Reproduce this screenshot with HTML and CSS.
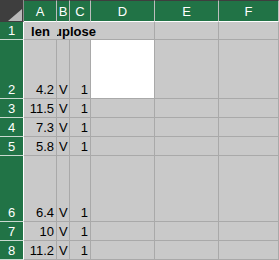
FILE: index.html
```html
<!DOCTYPE html>
<html>
<head>
<meta charset="utf-8">
<link rel="stylesheet" href="styles.css">
</head>
<body>
<div class="sheet">
  <div class="corner"><svg class="tri" width="14" height="12" viewBox="0 0 14 12"><polygon points="14,0 14,12 0,12" fill="#b9b9b9"/></svg></div>
  <div class="ch">A</div>
  <div class="ch">B</div>
  <div class="ch">C</div>
  <div class="ch">D</div>
  <div class="ch">E</div>
  <div class="ch">F</div>

  <div class="rh">1</div>
  <div class="c head center nob">len</div>
  <div class="c head span3"><span class="ovf">uplose</span></div>
  <div class="c"></div>
  <div class="c"></div>

  <div class="rh">2</div>
  <div class="c num">4.2</div>
  <div class="c txt">Ve</div>
  <div class="c num">1</div>
  <div class="c white"></div>
  <div class="c"></div>
  <div class="c"></div>

  <div class="rh">3</div>
  <div class="c num">11.5</div>
  <div class="c txt">Ve</div>
  <div class="c num">1</div>
  <div class="c"></div>
  <div class="c"></div>
  <div class="c"></div>

  <div class="rh">4</div>
  <div class="c num">7.3</div>
  <div class="c txt">Ve</div>
  <div class="c num">1</div>
  <div class="c"></div>
  <div class="c"></div>
  <div class="c"></div>

  <div class="rh">5</div>
  <div class="c num">5.8</div>
  <div class="c txt">Ve</div>
  <div class="c num">1</div>
  <div class="c"></div>
  <div class="c"></div>
  <div class="c"></div>

  <div class="rh">6</div>
  <div class="c num">6.4</div>
  <div class="c txt">Ve</div>
  <div class="c num">1</div>
  <div class="c"></div>
  <div class="c"></div>
  <div class="c"></div>

  <div class="rh">7</div>
  <div class="c num">10</div>
  <div class="c txt">Ve</div>
  <div class="c num">1</div>
  <div class="c"></div>
  <div class="c"></div>
  <div class="c"></div>

  <div class="rh">8</div>
  <div class="c num">11.2</div>
  <div class="c txt">Ve</div>
  <div class="c num">1</div>
  <div class="c"></div>
  <div class="c"></div>
  <div class="c"></div>
</div>
</body>
</html>
```

FILE: styles.css
```css
html, body {
  margin: 0;
  padding: 0;
  background: #c9c9c9;
  overflow: hidden;
}
.sheet {
  display: grid;
  grid-template-columns: 24px 33px 13px 21px 64px 64px 60px;
  grid-template-rows: 22px 18px 59px 19px 19px 19px 66px 19px 19px;
  width: 279px;
  height: 260px;
  font-family: "Liberation Sans", Arial, sans-serif;
  font-size: 13px;
  color: #000;
}
.sheet > div {
  box-sizing: border-box;
  overflow: hidden;
  white-space: nowrap;
}
.corner {
  background: #3e3e3e;
  border-right: 1px solid #8c8c8c;
  position: relative;
}
.tri {
  position: absolute;
  right: 1px;
  bottom: 1px;
}
.ch {
  background: #217346;
  border-top: 1px solid #3e3e3e;
  border-bottom: 1px solid #ffffff;
  border-right: 1px solid #bdbdbd;
  color: #ffffff;
  display: flex;
  align-items: center;
  justify-content: center;
  line-height: 1;
  padding-top: 1px;
}
.rh {
  background: #217346;
  border-right: 1px solid #ffffff;
  border-bottom: 1px solid #c9d9d0;
  color: #ffffff;
  display: flex;
  align-items: flex-end;
  justify-content: center;
  line-height: 15px;
  padding-bottom: 1px;
}
.c {
  background: #c9c9c9;
  border-right: 1px solid #a9a9a9;
  border-bottom: 1px solid #a9a9a9;
  display: flex;
  align-items: flex-end;
  line-height: 15px;
  padding-bottom: 1px;
}
.head {
  font-weight: bold;
  padding-bottom: 0;
}
.center {
  justify-content: center;
}
.nob {
  border-right: none;
}
.span3 {
  grid-column: span 3;
}
.ovf {
  margin-left: -3px;
}
.num {
  justify-content: flex-end;
  padding-right: 2px;
}
.txt {
  padding-left: 2px;
  letter-spacing: 2px;
}
.white {
  background: #ffffff;
}
```
